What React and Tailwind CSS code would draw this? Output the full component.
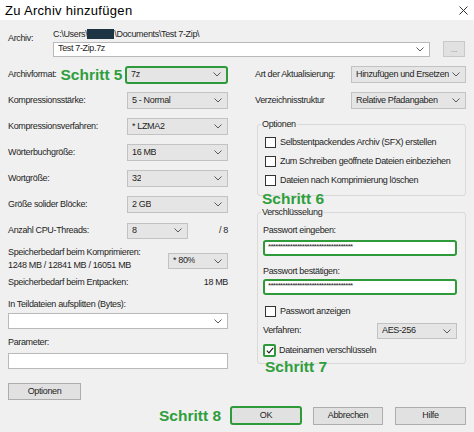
import React from 'react';

function Chevron() {
  return (
    <svg width="8" height="5" viewBox="0 0 8 5" className="shrink-0">
      <path d="M0.5 0.5L4 4L7.5 0.5" fill="none" stroke="#5a5a5a" strokeWidth="1" />
    </svg>
  );
}

// combobox, border/size/colour come in through className
function Select({ value, className }) {
  return (
    <div className={`flex items-center justify-between pl-[4px] pr-[5px] ${className}`}>
      <span className="truncate">{value}</span>
      <Chevron />
    </div>
  );
}

function Check({ label }) {
  return (
    <div className="flex items-center h-[13px]">
      <span className="w-[11px] h-[11px] border border-[#333] bg-white shrink-0" />
      <span className="ml-[4px]">{label}</span>
    </div>
  );
}

function Stars() {
  return <span className="text-[8px] tracking-[-0.7px] leading-none">{'*'.repeat(35)}</span>;
}

export default function App() {
  return (
    <div className="w-[474px] h-[432px] bg-[#f0f0f0] text-[9px] tracking-[-0.35px] text-[#1e1e1e] overflow-hidden font-['Liberation_Sans',Arial,sans-serif]">
      {/* title bar */}
      <div className="h-[20px] bg-white flex items-center justify-between pl-[5px] pr-[6px]">
        <span className="text-[13px] tracking-[0.3px] leading-none text-black">Zu Archiv hinzufügen</span>
        <svg width="9" height="9" viewBox="0 0 9 9">
          <path d="M0.5 0.5L8.5 8.5M8.5 0.5L0.5 8.5" stroke="#333" strokeWidth="1" />
        </svg>
      </div>

      <div className="px-[8px] pt-[8px]">
        {/* Archiv */}
        <div className="flex">
          <div className="w-[45px] pt-[4px] leading-[12px]">Archiv:</div>
          <div className="flex-1">
            <div className="h-[12px] leading-[12px] flex items-center">
              C:\Users\<span className="inline-block w-[27px] h-[10px] bg-[#1c3444]" />\Documents\Test 7-Zip\
            </div>
            <div className="flex items-center mt-[1px]">
              <Select value="Test 7-Zip.7z" className="w-[377px] h-[15px] bg-white border border-[#b9b9b9]" />
              <div className="ml-[13px] w-[22px] h-[16px] bg-[#e1e1e1] border border-[#c8c8c8] flex items-center justify-center text-[#999] leading-none">...</div>
            </div>
          </div>
        </div>

        <div className="flex mt-[9px]">
          {/* left column */}
          <div className="w-[220px] flex flex-col">
            <div className="flex flex-col gap-[9px]">
              <div className="flex items-center h-[17px]">
                <span>Archivformat:</span>
                <span className="ml-[4px] text-[15.5px] font-bold tracking-normal text-[#2f9e3c] leading-none">Schritt 5</span>
                <Select value="7z" className="ml-auto w-[103px] h-[18px] bg-[#e5e5e5] border-2 border-[#2e9a3a] rounded-[3px]" />
              </div>
              <div className="flex items-center h-[17px]">
                <span>Kompressionsstärke:</span>
                <Select value="5 - Normal" className="ml-auto w-[101px] h-[17px] bg-[#e5e5e5] border border-[#c2c2c2]" />
              </div>
              <div className="flex items-center h-[17px]">
                <span>Kompressionsverfahren:</span>
                <Select value="*  LZMA2" className="ml-auto w-[101px] h-[17px] bg-[#e5e5e5] border border-[#c2c2c2]" />
              </div>
              <div className="flex items-center h-[17px]">
                <span>Wörterbuchgröße:</span>
                <Select value="16 MB" className="ml-auto w-[101px] h-[17px] bg-[#e5e5e5] border border-[#c2c2c2]" />
              </div>
              <div className="flex items-center h-[17px]">
                <span>Wortgröße:</span>
                <Select value="32" className="ml-auto w-[101px] h-[17px] bg-[#e5e5e5] border border-[#c2c2c2]" />
              </div>
              <div className="flex items-center h-[17px]">
                <span>Größe solider Blöcke:</span>
                <Select value="2 GB" className="ml-auto w-[101px] h-[17px] bg-[#e5e5e5] border border-[#c2c2c2]" />
              </div>
              <div className="flex items-center h-[17px]">
                <span className="w-[119px]">Anzahl CPU-Threads:</span>
                <Select value="8" className="w-[61px] h-[16px] bg-[#e5e5e5] border border-[#c2c2c2]" />
                <span className="ml-auto">/ 8</span>
              </div>
            </div>

            <div className="flex mt-[7px]">
              <div className="leading-[13px]">
                <div>Speicherbedarf beim Komprimieren:</div>
                <div>1248 MB / 12841 MB / 16051 MB</div>
              </div>
              <Select value="*  80%" className="ml-auto mt-[7px] w-[60px] h-[16px] bg-[#e5e5e5] border border-[#c2c2c2]" />
            </div>
            <div className="flex justify-between items-center h-[13px] mt-[4px]">
              <span>Speicherbedarf beim Entpacken:</span>
              <span>18 MB</span>
            </div>

            <div className="h-[13px] leading-[13px] mt-[9px]">In Teildateien aufsplitten (Bytes):</div>
            <Select value="" className="mt-[2px] w-full h-[16px] bg-white border border-[#b9b9b9]" />

            <div className="h-[13px] leading-[13px] mt-[7px]">Parameter:</div>
            <div className="mt-[4px] w-full h-[16px] bg-white border border-[#b9b9b9]" />

            <button className="mt-[14px] w-[73px] h-[17px] bg-[#e1e1e1] border border-[#adadad] leading-none">Optionen</button>
          </div>

          {/* right column */}
          <div className="w-[211px] ml-[27px] flex flex-col">
            <div className="flex items-center h-[17px]">
              <span>Art der Aktualisierung:</span>
              <Select value="Hinzufügen und Ersetzen" className="ml-auto w-[115px] h-[17px] bg-[#e5e5e5] border border-[#c2c2c2]" />
            </div>
            <div className="flex items-center h-[17px] mt-[9px]">
              <span>Verzeichnisstruktur</span>
              <Select value="Relative Pfadangaben" className="ml-auto w-[115px] h-[17px] bg-[#e5e5e5] border border-[#c2c2c2]" />
            </div>

            <fieldset className="mt-[9px] ml-[2px] border border-[#d9d9d9] rounded-[3px] pl-[3px] pr-[6px] pb-[8px]">
              <legend className="px-[1px] leading-[12px]">Optionen</legend>
              <div className="pl-[4px] mt-[6px] flex flex-col gap-[6px]">
                <Check label="Selbstentpackendes Archiv (SFX) erstellen" />
                <Check label="Zum Schreiben geöffnete Dateien einbeziehen" />
                <Check label="Dateien nach Komprimierung löschen" />
              </div>
            </fieldset>

            <div className="ml-[7px] -mt-[5px] h-[15px] leading-[15px] text-[15.5px] font-bold tracking-normal text-[#2f9e3c] relative">Schritt 6</div>

            <fieldset className="ml-[2px] border border-[#d9d9d9] rounded-[3px] pl-[3px] pr-[8px] pb-[6px]">
              <legend className="px-[1px] leading-[12px]">Verschlüsselung</legend>
              <div className="pl-[2px] flex flex-col">
                <div className="h-[12px] leading-[12px] mt-[6px]">Passwort eingeben:</div>
                <div className="mt-[4px] h-[16px] bg-white border-2 border-[#2e9a3a] rounded-[3px] flex items-center pl-[3px] pb-[3px]">
                  <Stars />
                </div>
                <div className="h-[12px] leading-[12px] mt-[9px]">Passwort bestätigen:</div>
                <div className="mt-[2px] h-[16px] bg-white border-2 border-[#2e9a3a] rounded-[3px] flex items-center pl-[3px] pb-[3px]">
                  <Stars />
                </div>
                <div className="mt-[10px] pl-[2px]">
                  <Check label="Passwort anzeigen" />
                </div>
                <div className="mt-[5px] flex items-center h-[16px]">
                  <span>Verfahren:</span>
                  <Select value="AES-256" className="ml-auto w-[80px] h-[16px] bg-[#e5e5e5] border border-[#c2c2c2]" />
                </div>
                <div className="mt-[5px] flex items-center h-[13px]">
                  <span className="w-[13px] h-[13px] border-2 border-[#2e9a3a] rounded-[2px] bg-white flex items-center justify-center shrink-0">
                    <svg width="8" height="7" viewBox="0 0 8 7">
                      <path d="M0.8 3.6L3 5.8L7.2 0.9" fill="none" stroke="#222" strokeWidth="1.2" />
                    </svg>
                  </span>
                  <span className="ml-[3px]">Dateinamen verschlüsseln</span>
                </div>
              </div>
            </fieldset>

            <div className="ml-[10px] -mt-[5px] h-[15px] leading-[15px] text-[15.5px] font-bold tracking-normal text-[#2f9e3c] relative">Schritt 7</div>
          </div>
        </div>

        {/* bottom buttons */}
        <div className="flex items-center justify-end mt-[6px]">
          <span className="text-[15.5px] font-bold tracking-normal text-[#2f9e3c] leading-none">Schritt 8</span>
          <button className="ml-[9px] w-[72px] h-[19px] bg-[#e1e1e1] border-2 border-[#2e9a3a] rounded-[3px] leading-none">OK</button>
          <button className="ml-[11px] w-[70px] h-[18px] bg-[#e1e1e1] border border-[#adadad] leading-none">Abbrechen</button>
          <button className="ml-[12px] w-[71px] h-[18px] bg-[#e1e1e1] border border-[#adadad] leading-none">Hilfe</button>
        </div>
      </div>
    </div>
  );
}
